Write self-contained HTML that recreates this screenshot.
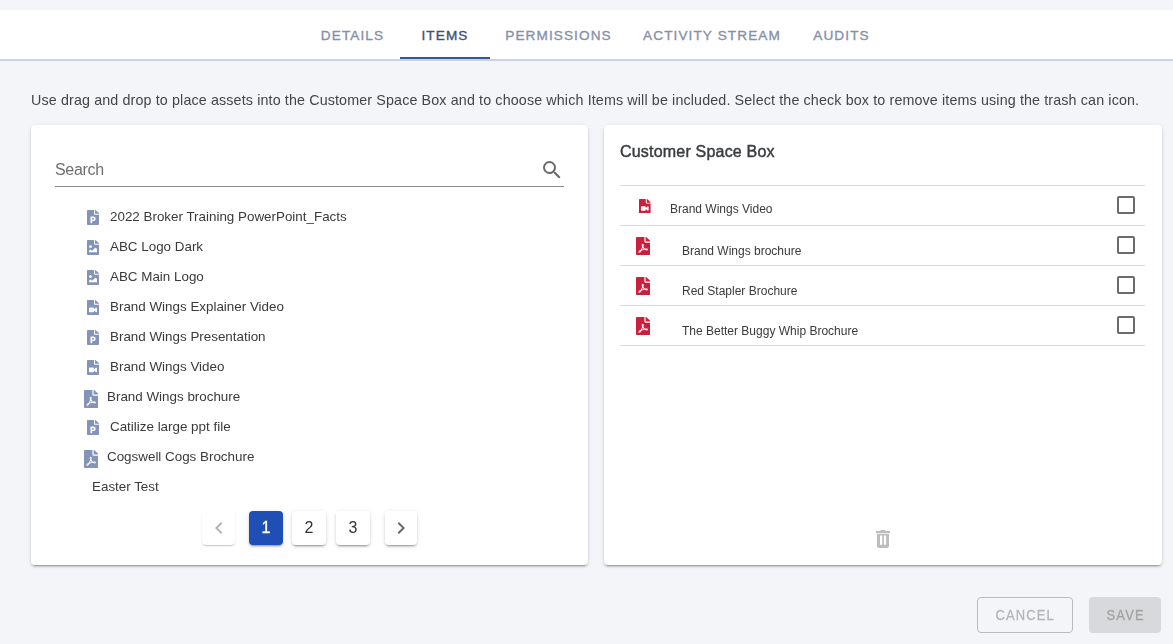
<!DOCTYPE html>
<html><head><meta charset="utf-8">
<style>
*{box-sizing:border-box;margin:0;padding:0}
html{background:#f4f5f8}
body{will-change:opacity;opacity:.9999}
html,body{width:1173px;height:644px;overflow:hidden;font-family:"Liberation Sans",sans-serif;color:#333}
.abs{position:absolute}
#tabs{left:0;top:10px;width:1173px;height:51px;background:#fff;border-bottom:2px solid #cdd2de}
.tab{position:absolute;top:0;height:49px;line-height:51px;font-size:13.600px;letter-spacing:1.1px;color:#8691a8;-webkit-text-stroke:0.35px currentColor;text-align:center;white-space:nowrap;font-weight:500}
.tab.act{color:#425070;border-bottom:2px solid #34569a}
#help{left:31px;top:92px;font-size:14.3px;color:#454545;white-space:nowrap;letter-spacing:0.13px}
.card{background:#fff;border-radius:4px;box-shadow:0 3px 1px -2px rgba(0,0,0,.2),0 2px 2px 0 rgba(0,0,0,.14),0 1px 5px 0 rgba(0,0,0,.12)}
#left{left:31px;top:125px;width:557px;height:440px}
#right{left:604px;top:125px;width:557.500px;height:440px}
#search{left:24px;top:36px;font-size:16px;color:#6e6e6e;letter-spacing:-0.3px}
#sline{left:24px;top:61px;width:509px;height:1px;background:#8a8a8a}
.it{position:absolute;font-size:13.4px;color:#3a3a3a;white-space:nowrap;height:20px;line-height:20px}
.ic{position:absolute}
.pg{position:absolute;top:386px;height:34px;border-radius:4px;background:#fff;box-shadow:0 3px 1px -2px rgba(0,0,0,.2),0 2px 2px 0 rgba(0,0,0,.14),0 1px 5px 0 rgba(0,0,0,.12);text-align:center;line-height:34px;font-size:16px;color:#333}
#title{left:16px;top:18px;letter-spacing:0.2px;font-size:16px;color:#3a3c40;font-weight:500;-webkit-text-stroke:0.45px #3a3c40}
.row{position:absolute;left:16px;width:525px;height:40px;border-top:1px solid #d9d9d9}
.rt{position:absolute;font-size:12px;color:#3a3a3a;white-space:nowrap}
.cb{position:absolute;left:497px;top:10px;width:18px;height:18px;border:2px solid #6b6b6b;border-radius:2px}
.btn{position:absolute;top:597px;height:36px;border-radius:4px;font-size:14px;letter-spacing:1.25px;text-align:center;line-height:34px;color:#b4b5b7;-webkit-text-stroke:0.3px currentColor}
.sq{display:inline-block;transform:scaleX(.925);margin-right:-1.25px}
</style></head><body>
<svg width="0" height="0" style="position:absolute"><defs>
<path id="fpdf" d="M181.900 256.100c-5-16-4.900-46.900-2-46.900 8.400 0 7.600 36.900 2 46.900zm-1.700 47.200c-7.700 20.200-17.300 43.300-28.400 62.700 18.300-7 39-17.200 62.900-21.900-12.700-9.600-24.900-23.400-34.500-40.800zM86.100 428.100c0 .8 13.200-5.400 34.900-40.200-6.700 6.300-29.100 24.500-34.900 40.200zM248 160h136v328c0 13.300-10.700 24-24 24H24c-13.300 0-24-10.700-24-24V24C0 10.700 10.700 0 24 0h200v136c0 13.200 10.800 24 24 24zm-8 171.800c-20-12.200-33.300-29-42.700-53.800 4.500-18.500 11.600-46.600 6.200-64.200-4.700-29.400-42.400-26.500-47.800-6.800-5 18.300-.4 44.100 8.100 77-11.600 27.600-28.700 64.600-40.800 85.800-.1 0-.1.100-.2.100-27.100 13.900-73.600 44.500-54.500 68 5.600 6.900 16 10 21.500 10 17.900 0 35.700-18 61.100-61.800 25.800-8.500 54.100-19.100 79-23.200 21.700 11.800 47.100 19.500 64 19.500 29.200 0 31.200-32 19.700-43.400-13.900-13.600-54.300-9.700-73.600-7.200zM377 105L279 7c-4.500-4.500-10.600-7-17-7h-6v128h128v-6.100c0-6.300-2.500-12.400-7-16.900zm-74.100 255.300c4.100-2.700-2.500-11.900-42.800-9 37.100 15.800 42.800 9 42.800 9z"/>
<path id="fv" d="M384 121.941V128H256V0h6.059c6.365 0 12.470 2.529 16.971 7.029l97.941 97.941A24.005 24.005 0 0 1 384 121.941zM224 136V0H24C10.745 0 0 10.745 0 24v464c0 13.255 10.745 24 24 24h336c13.255 0 24-10.745 24-24V160H248c-13.200 0-24-10.800-24-24zm96 144.016v111.963c0 21.445-25.943 31.998-40.971 16.971L224 353.941V392c0 13.255-10.745 24-24 24H88c-13.255 0-24-10.745-24-24V280c0-13.255 10.745-24 24-24h112c13.255 0 24 10.745 24 24v38.059l55.029-55.013c15.011-15.010 40.971-4.491 40.971 16.970z"/>
<path id="fi" d="M384 121.941V128H256V0h6.059a24 24 0 0 1 16.970 7.029l97.941 97.941a24.002 24.002 0 0 1 7.030 16.971zM248 160c-13.200 0-24-10.800-24-24V0H24C10.745 0 0 10.745 0 24v464c0 13.255 10.745 24 24 24h336c13.255 0 24-10.745 24-24V160H248zm-135.455 16c26.510 0 48 21.490 48 48s-21.490 48-48 48-48-21.490-48-48 21.491-48 48-48zm208 240h-256l.485-48.485L104.545 328c4.686-4.686 11.799-4.201 16.485.485L160.545 368 264.060 264.485c4.686-4.686 12.284-4.686 16.971 0L320.545 304v112z"/>
<path id="fp" d="M193.700 271.200c8.800 0 15.500 2.700 20.300 8.100 9.600 10.900 9.800 32.700-.2 44.100-4.900 5.600-11.900 8.500-21.100 8.500h-26.900v-60.700h27.900zM377 105L279 7c-4.500-4.500-10.600-7-17-7h-6v128h128v-6.100c0-6.300-2.500-12.400-7-16.900zm-153 31V0H24C10.700 0 0 10.700 0 24v464c0 13.300 10.700 24 24 24h336c13.300 0 24-10.700 24-24V160H248c-13.200 0-24-10.800-24-24zm53 165.200c0 90.300-88.800 77.600-111.100 77.600V436c0 6.600-5.400 12-12 12h-30.800c-6.600 0-12-5.400-12-12V236.200c0-6.600 5.400-12 12-12h81c44.500 0 72.900 32.800 72.900 77z"/>
</defs></svg>
<div id="tabs" class="abs">
 <div class="tab" style="left:305px;width:95px">DETAILS</div>
 <div class="tab act" style="left:400px;width:90px">ITEMS</div>
 <div class="tab" style="left:490px;width:137px">PERMISSIONS</div>
 <div class="tab" style="left:627px;width:170px">ACTIVITY STREAM</div>
 <div class="tab" style="left:797px;width:89px">AUDITS</div>
</div>
<div id="help" class="abs">Use drag and drop to place assets into the Customer Space Box and to choose which Items will be included. Select the check box to remove items using the trash can icon.</div>

<div id="left" class="abs card">
 <div id="search" class="abs">Search</div>
 <svg class="abs" style="left:509px;top:33px" width="24" height="24" viewBox="0 0 24 24"><path fill="#6a6a6a" d="M15.5 14h-.79l-.28-.27A6.47 6.47 0 0 0 16 9.5 6.5 6.5 0 1 0 9.500 16c1.610 0 3.090-.59 4.230-1.570l.27.28v.79l5 4.990L20.490 19l-4.990-5zm-6 0C7.010 14 5 11.990 5 9.500S7.010 5 9.500 5 14 7.010 14 9.500 11.990 14 9.500 14z"/></svg>
 <div id="sline" class="abs"></div>
 <svg class="ic" style="left:56px;top:85px" width="12" height="15" viewBox="0 0 384 512" preserveAspectRatio="none"><use href="#fp" fill="#8493b8"/></svg>
 <div class="it" style="left:79px;top:82px">2022 Broker Training PowerPoint_Facts</div>
 <svg class="ic" style="left:56px;top:115px" width="12" height="15" viewBox="0 0 384 512" preserveAspectRatio="none"><use href="#fi" fill="#8493b8"/></svg>
 <div class="it" style="left:79px;top:112px">ABC Logo Dark</div>
 <svg class="ic" style="left:56px;top:145px" width="12" height="15" viewBox="0 0 384 512" preserveAspectRatio="none"><use href="#fi" fill="#8493b8"/></svg>
 <div class="it" style="left:79px;top:142px">ABC Main Logo</div>
 <svg class="ic" style="left:56px;top:175px" width="12" height="15" viewBox="0 0 384 512" preserveAspectRatio="none"><use href="#fv" fill="#8493b8"/></svg>
 <div class="it" style="left:79px;top:172px">Brand Wings Explainer Video</div>
 <svg class="ic" style="left:56px;top:205px" width="12" height="15" viewBox="0 0 384 512" preserveAspectRatio="none"><use href="#fp" fill="#8493b8"/></svg>
 <div class="it" style="left:79px;top:202px">Brand Wings Presentation</div>
 <svg class="ic" style="left:56px;top:235px" width="12" height="15" viewBox="0 0 384 512" preserveAspectRatio="none"><use href="#fv" fill="#8493b8"/></svg>
 <div class="it" style="left:79px;top:232px">Brand Wings Video</div>
 <svg class="ic" style="left:53px;top:265px" width="14.4" height="18" viewBox="0 0 384 512" preserveAspectRatio="none"><use href="#fpdf" fill="#8493b8"/></svg>
 <div class="it" style="left:76px;top:262px">Brand Wings brochure</div>
 <svg class="ic" style="left:56px;top:295px" width="12" height="15" viewBox="0 0 384 512" preserveAspectRatio="none"><use href="#fp" fill="#8493b8"/></svg>
 <div class="it" style="left:79px;top:292px">Catilize large ppt file</div>
 <svg class="ic" style="left:53px;top:325px" width="14.4" height="18" viewBox="0 0 384 512" preserveAspectRatio="none"><use href="#fpdf" fill="#8493b8"/></svg>
 <div class="it" style="left:76px;top:322px">Cogswell Cogs Brochure</div>
 <div class="it" style="left:61px;top:352px">Easter Test</div>
 <div class="pg" style="left:171px;width:33px;color:#aaa;box-shadow:0 2px 1px -1px rgba(0,0,0,.12),0 1px 1px 0 rgba(0,0,0,.08),0 1px 3px 0 rgba(0,0,0,.08)">
   <svg width="24" height="24" viewBox="0 0 24 24" style="margin-top:5px"><path fill="#b5b5b5" d="M15.41 7.410L14 6l-6 6 6 6 1.410-1.410L10.830 12z"/></svg></div>
 <div class="pg" style="left:218px;width:34px;background:#1f4fb4;color:#fff;-webkit-text-stroke:0.3px #fff">1</div>
 <div class="pg" style="left:261px;width:34px">2</div>
 <div class="pg" style="left:305px;width:34px">3</div>
 <div class="pg" style="left:354px;width:32px">
   <svg width="24" height="24" viewBox="0 0 24 24" style="margin-top:5px"><path fill="#6a6a6a" d="M10 6L8.590 7.410 13.170 12l-4.580 4.590L10 18l6-6z"/></svg></div>
</div>

<div id="right" class="abs card">
 <div id="title" class="abs">Customer Space Box</div>
 <div class="row" style="top:60px"><svg class="ic" style="left:19.300px;top:12.500px" width="11.600" height="14.500" viewBox="0 0 384 512" preserveAspectRatio="none"><use href="#fv" fill="#c8203f"/></svg><div class="rt" style="left:50px;top:16px">Brand Wings Video</div><div class="cb"></div></div>
 <div class="row" style="top:100px"><svg class="ic" style="left:16px;top:11px" width="14.4" height="18" viewBox="0 0 384 512" preserveAspectRatio="none"><use href="#fpdf" fill="#c8203f"/></svg><div class="rt" style="left:62px;top:18px">Brand Wings brochure</div><div class="cb"></div></div>
 <div class="row" style="top:140px"><svg class="ic" style="left:16px;top:11px" width="14.4" height="18" viewBox="0 0 384 512" preserveAspectRatio="none"><use href="#fpdf" fill="#c8203f"/></svg><div class="rt" style="left:62px;top:18px">Red Stapler Brochure</div><div class="cb"></div></div>
 <div class="row" style="top:180px"><svg class="ic" style="left:16px;top:11px" width="14.4" height="18" viewBox="0 0 384 512" preserveAspectRatio="none"><use href="#fpdf" fill="#c8203f"/></svg><div class="rt" style="left:62px;top:18px">The Better Buggy Whip Brochure</div><div class="cb"></div></div>
 <div class="row" style="top:220px;height:1px"></div>
 <svg class="abs" style="left:267px;top:402px" width="24" height="24" viewBox="0 0 24 24"><path fill="#bdbdbd" d="M9.500 3h5v1.200h-5zM5 4h14v2.200H5zM6 7h12v12a2 2 0 0 1-2 2H8a2 2 0 0 1-2-2z"/><path fill="#fff" d="M9 8.500h2.200v9.300H9zM12.900 8.500h2.200v9.300h-2.200z"/></svg>
</div>

<div class="btn" style="left:977px;width:96px;border:1px solid #b9babc;"><span class="sq">CANCEL</span></div>
<div class="btn" style="left:1089px;width:72px;background:#d8d9db;line-height:36px;color:#a3a3a5"><span class="sq">SAVE</span></div>

</body></html>
